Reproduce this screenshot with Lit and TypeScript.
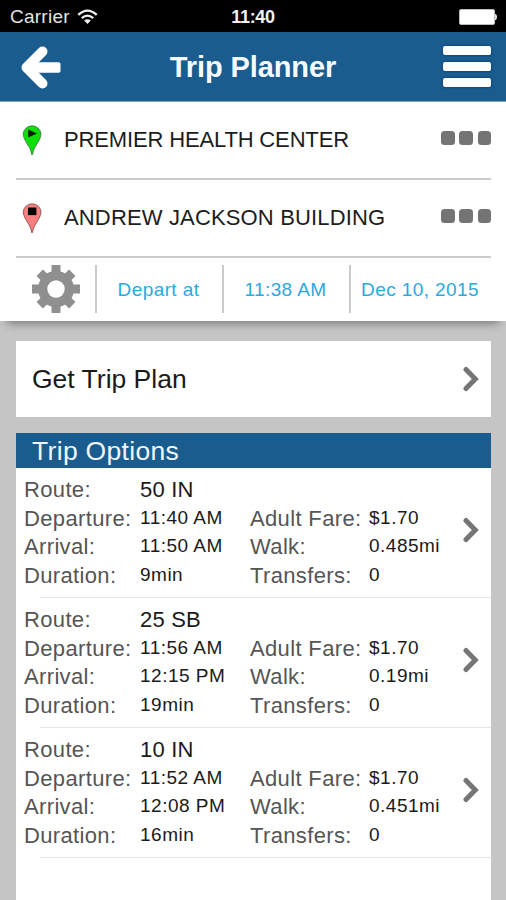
import { LitElement, html, css, svg } from "lit";
import { customElement, property } from "lit/decorators.js";

interface Trip {
  route: string;
  departure: string;
  arrival: string;
  duration: string;
  fare: string;
  walk: string;
  transfers: string;
}

const trips: Trip[] = [
  { route: "50 IN", departure: "11:40 AM", arrival: "11:50 AM", duration: "9min", fare: "$1.70", walk: "0.485mi", transfers: "0" },
  { route: "25 SB", departure: "11:56 AM", arrival: "12:15 PM", duration: "19min", fare: "$1.70", walk: "0.19mi", transfers: "0" },
  { route: "10 IN", departure: "11:52 AM", arrival: "12:08 PM", duration: "16min", fare: "$1.70", walk: "0.451mi", transfers: "0" },
];

const chevron = html`<svg class="chevron" width="18" height="26" viewBox="0 0 18 26">
  <path d="M4 3.5 L13.3 13 L4 22.5" fill="none" stroke="#757575" stroke-width="5" stroke-linecap="round" />
</svg>`;

@customElement("status-bar")
class StatusBar extends LitElement {
  static styles = css`
    :host { display: grid; grid-template-columns: 1fr auto 1fr; align-items: center; height: 32px; padding: 2px 8px 0 10px; box-sizing: border-box; background: #000; color: #e4e4e4; }
    .left { display: flex; align-items: center; gap: 7px; font-size: 19px; letter-spacing: 0.25px; }
    .time { color: #f2f2f2; font-size: 18px; font-weight: bold; letter-spacing: -0.3px; margin-right: 2px; }
    .battery { justify-self: end; }
    svg { display: block; }
  `;
  render() {
    return html`
      <div class="left">
        <span>Carrier</span>
        <svg width="21" height="16" viewBox="0 0 21 16">
          <g fill="none" stroke="#f0f0f0" stroke-width="2.3">
            <path d="M1.3 5.8 Q10.5 -2.6 19.7 5.8" />
            <path d="M4.8 9.2 Q10.5 4 16.2 9.2" />
          </g>
          <path d="M10.5 15 L7.2 11.6 Q10.5 8.8 13.8 11.6 Z" fill="#f0f0f0" />
        </svg>
      </div>
      <span class="time">11:40</span>
      <svg class="battery" width="39" height="16" viewBox="0 0 39 16">
        <rect x="0.5" y="0.5" width="35" height="15" rx="1.5" fill="#fff" stroke="#bbb" />
        <path d="M36.5 5 Q39 8 36.5 11 Z" fill="#ddd" stroke="#ddd" />
      </svg>
    `;
  }
}

@customElement("nav-bar")
class NavBar extends LitElement {
  static styles = css`
    :host { display: grid; grid-template-columns: 48px 1fr 48px; align-items: center; height: 70px; padding: 0 15px 0 20px; box-sizing: border-box; background: #1a5c8e; border-bottom: 1px solid #7f9fc0; color: #fff; }
    .title { text-align: center; font-size: 29px; font-weight: bold; letter-spacing: -0.1px; color: #f6faff; padding: 2px 5px 0 0; }
    .menu { display: grid; gap: 7px; }
    .bar { height: 9px; border-radius: 2px; background: #fff; box-shadow: 0 0 2px 1px #0f4a85; }
    svg { display: block; }
  `;
  render() {
    return html`
      <svg width="42" height="44" viewBox="0 0 42 44">
        <path d="M22.5 6.5 L6.5 22.5 L22.5 38.5" fill="none" stroke="#fff" stroke-width="10" stroke-linecap="round" stroke-linejoin="round" />
        <rect x="6" y="17.3" width="34.5" height="10.4" rx="1.8" fill="#fff" />
      </svg>
      <span class="title">Trip Planner</span>
      <div class="menu"><div class="bar"></div><div class="bar"></div><div class="bar"></div></div>
    `;
  }
}

@customElement("place-row")
class PlaceRow extends LitElement {
  @property() name = "";
  @property() kind = "start";
  static styles = css`
    :host { display: flex; align-items: center; height: 78px; margin: 0 15px 0 16px; box-sizing: border-box; border-bottom: 2px solid #cbcbcb; font-size: 22px; letter-spacing: -0.15px; color: #1c1c1c; }
    :host([kind="end"]) { letter-spacing: 0.15px; }
    .pin { margin: 0 22px 0 6px; }
    .name { flex: 1; white-space: nowrap; padding-bottom: 1px; }
    .more { display: flex; gap: 4.8px; padding-bottom: 4px; }
    .dot { width: 13.4px; height: 13.4px; border-radius: 3.5px; background: #747474; }
  `;
  render() {
    const start = this.kind === "start";
    return html`
      <svg class="pin" width="20" height="34" viewBox="0 0 20 34">
        <path d="M10.3 31.5 L9.6 31.5 C9.4 24 1.2 18 1.2 10.5 A9 9 0 0 1 19 10.5 C19 18 10.8 24 10.6 31.5 Z" fill=${start ? "#0be00b" : "#fb7f7f"} stroke=${start ? "#3a803a" : "#855050"} stroke-width="0.9" />
        ${start ? svg`<path d="M6.2 6.4 L15 10.4 L6.2 14.4 Z" fill="#062006" />` : svg`<rect x="6" y="6.5" width="8.4" height="7.6" fill="#000" />`}
      </svg>
      <span class="name">${this.name}</span>
      <div class="more"><div class="dot"></div><div class="dot"></div><div class="dot"></div></div>
    `;
  }
}

@customElement("trip-item")
class TripItem extends LitElement {
  @property({ attribute: false }) trip!: Trip;
  static styles = css`
    :host { display: flex; align-items: center; height: 130px; box-sizing: border-box; padding: 0 0 0 8px; background: linear-gradient(#e6e6e6, #e6e6e6) 24px 129px / 100% 1px no-repeat; }
    .fields { display: grid; grid-template-columns: 116px 110px 119px auto; grid-template-rows: repeat(4, 28.5px); line-height: 28.5px; height: 114px; flex: 1; }
    .label { font-size: 22px; letter-spacing: 0.35px; color: #555; white-space: nowrap; }
    .value { font-size: 19px; letter-spacing: 0.5px; color: #1a1a1a; white-space: nowrap; margin-top: -1px; }
    .route { font-size: 22px; letter-spacing: 0.2px; grid-column: 2 / -1; margin-top: 0; }
    .chevron { margin: 0 11px 6px 0; }
  `;
  render() {
    const t = this.trip;
    return html`
      <div class="fields">
        <span class="label">Route:</span><span class="value route">${t.route}</span>
        <span class="label">Departure:</span><span class="value">${t.departure}</span>
        <span class="label">Adult Fare:</span><span class="value">${t.fare}</span>
        <span class="label">Arrival:</span><span class="value">${t.arrival}</span>
        <span class="label">Walk:</span><span class="value">${t.walk}</span>
        <span class="label">Duration:</span><span class="value">${t.duration}</span>
        <span class="label">Transfers:</span><span class="value">${t.transfers}</span>
      </div>
      ${chevron}
    `;
  }
}

@customElement("app-root")
class AppRoot extends LitElement {
  static styles = css`
    :host { display: flex; flex-direction: column; height: 900px; overflow: hidden; background: #c5c5c5; font-family: "Liberation Sans", Arial, sans-serif; }
    .form { background: #fff; height: 219px; flex: none; box-shadow: 0 9px 9px -7px rgba(0, 0, 0, 0.42); }
    .when { display: grid; grid-template-columns: 79px 127px 127px 1fr; height: 48px; margin: 7px 15px 0 16px; font-size: 19px; letter-spacing: 0.4px; color: #2aa9df; }
    .cell { display: flex; align-items: center; justify-content: center; border-left: 2px solid #cbcbcb; white-space: nowrap; padding: 1px 2px 0 0; }
    .gear { display: flex; align-items: center; justify-content: center; }
    .card { background: #fff; margin: 0 15px 0 16px; }
    .action { display: flex; align-items: center; justify-content: space-between; height: 76px; margin-top: 20px; padding: 0 11px 0 16px; box-sizing: border-box; flex: none; font-size: 26.5px; color: #1a1a1a; }
    .chevron { margin-bottom: 1px; }
    .results { margin-top: 16px; flex: 1; }
    .heading { height: 35px; line-height: 36px; padding-left: 16px; background: #1a5c8e; color: #f0f6fc; font-size: 26.5px; letter-spacing: 0.32px; }
  `;
  render() {
    return html`
      <status-bar></status-bar>
      <nav-bar></nav-bar>
      <div class="form">
        <place-row kind="start" name="PREMIER HEALTH CENTER"></place-row>
        <place-row kind="end" name="ANDREW JACKSON BUILDING"></place-row>
        <div class="when">
          <div class="gear">
            <svg width="48" height="48" viewBox="-24 -24 48 48">
              <g fill="#8f8f8f">
                ${[0, 45, 90, 135].map((a) => svg`<rect x="-4.5" y=${a % 90 ? -23 : -24} width="9" height=${a % 90 ? 46 : 48} transform="rotate(${a})" />`)}
                <circle r="18" />
              </g>
              <circle r="8.7" fill="#fff" />
            </svg>
          </div>
          <div class="cell">Depart at</div>
          <div class="cell">11:38 AM</div>
          <div class="cell">Dec 10, 2015</div>
        </div>
      </div>
      <div class="card action"><span>Get Trip Plan</span>${chevron}</div>
      <div class="card results">
        <div class="heading">Trip Options</div>
        ${trips.map((t) => html`<trip-item .trip=${t}></trip-item>`)}
      </div>
    `;
  }
}
